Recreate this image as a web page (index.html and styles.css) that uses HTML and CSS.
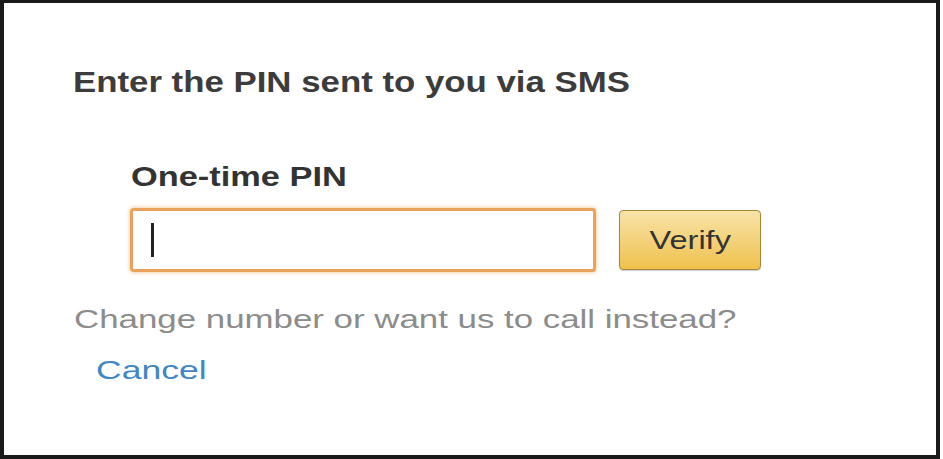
FILE: index.html
```html
<!DOCTYPE html>
<html lang="en">
<head>
<meta charset="UTF-8">
<meta name="viewport" content="width=device-width, initial-scale=1.0">
<title>Verify PIN</title>
<link rel="stylesheet" href="styles.css">
</head>
<body>
<div class="frame">
    <div class="title">Enter the PIN sent to you via SMS</div>
    <div class="pin-form">
        <label class="pin-label">One-time PIN</label>
        <div class="pin-row">
            <div class="pin-input"><span class="caret"></span></div>
            <button class="btn-verify"><span>Verify</span></button>
        </div>
    </div>
    <div class="hint">Change number or want us to call instead?</div>
    <a class="cancel" href="#">Cancel</a>
</div>
</body>
</html>
```

FILE: styles.css
```css
body {
    margin: 0;
    padding: 0;
    background-color: #fff;
    font-family: "Liberation Sans", Arial, sans-serif;
}
.frame {
    box-sizing: border-box;
    width: 940px;
    height: 459px;
    border: 4px solid #1a1a1a;
    border-top-width: 3px;
    padding: 62px 0 0 69px;
}
/* the source picture is stretched sideways, so the text is too */
.title {
    width: fit-content;
    font-size: 29px;
    line-height: 34px;
    font-weight: bold;
    color: #3c3c3c;
    transform: scaleX(1.2);
    transform-origin: left;
}
.pin-form {
    margin: 62px 0 0 57px;
}
.pin-label {
    display: block;
    width: fit-content;
    margin-left: 1px;
    font-size: 27.5px;
    line-height: 32px;
    font-weight: bold;
    color: #333;
    transform: scaleX(1.25);
    transform-origin: left;
}
.pin-row {
    display: flex;
    align-items: center;
    gap: 23px;
    margin-top: 15px;
}
.pin-input {
    box-sizing: border-box;
    width: 466px;
    height: 64px;
    border: 3px solid #e9a25c;
    border-radius: 4px;
    box-shadow: 0 0 4px #f4b77a;
    background: #fff;
    display: flex;
    align-items: center;
    padding-left: 18px;
}
.caret {
    width: 3px;
    height: 34px;
    background: #222;
}
.btn-verify {
    box-sizing: border-box;
    width: 142px;
    height: 60px;
    border: 1px solid #a88734;
    border-radius: 4px;
    background: linear-gradient(#f8e3a9, #efc14d);
    box-shadow: 0 1px 1px rgba(0, 0, 0, 0.2);
    font-family: inherit;
    font-size: 25px;
    color: #333;
    cursor: pointer;
    padding: 0;
}
.btn-verify span {
    display: inline-block;
    transform: scaleX(1.3);
}
.hint {
    width: fit-content;
    margin: 31px 0 0 1px;
    font-size: 26.5px;
    line-height: 32px;
    color: #8c8c8c;
    transform: scaleX(1.315);
    transform-origin: left;
}
.cancel {
    display: inline-block;
    margin: 19px 0 0 23px;
    font-size: 26.5px;
    line-height: 32px;
    color: #3f87c5;
    text-decoration: none;
    transform: scaleX(1.34);
    transform-origin: left;
}
```
